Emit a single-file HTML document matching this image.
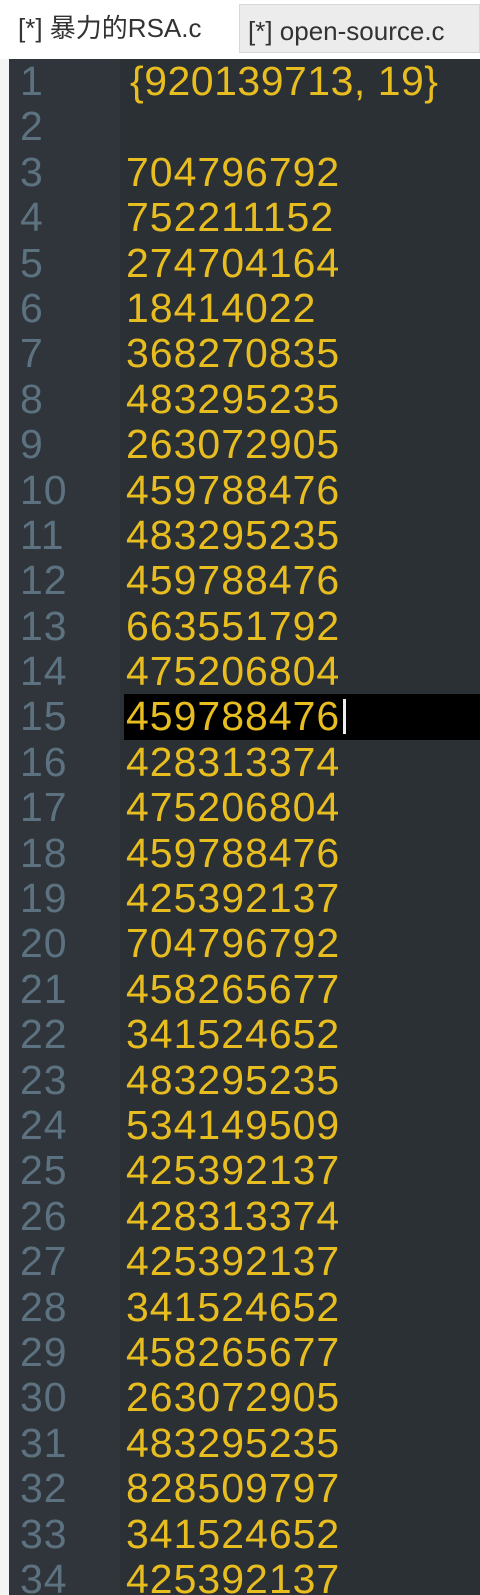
<!DOCTYPE html>
<html><head><meta charset="utf-8"><style>
html,body{margin:0;padding:0;width:480px;height:1595px;overflow:hidden;background:#f4f4f4;font-family:"Liberation Sans","Noto Sans CJK SC",sans-serif}
.tabs{position:absolute;left:0;top:0;width:480px;height:59px;background:#fff}
.t1{position:absolute;left:18px;top:8px;font-size:26px;color:#333}
.t2{position:absolute;left:239px;top:4px;width:241px;height:49px;background:#ececec;border:1px solid #d8d8d8;box-sizing:border-box}
.t2 span{position:absolute;left:8px;top:11px;font-size:26px;color:#333}
.ed{position:absolute;left:9px;top:59px;width:471px;height:1536px;background:#2b3035;overflow:hidden}
.gut{position:absolute;left:0;top:0;width:111px;height:100%;background:#2f353a}
.ln{position:absolute;left:0;top:0;width:100%;font-size:41px;line-height:45.4px}
.row{height:45.4px;position:relative;white-space:pre}
.n{position:absolute;left:11px;color:#5d7280;letter-spacing:1px}
.c{position:absolute;left:117px;color:#e8bd20;letter-spacing:1px}
.cur{background:#000;left:115px;right:0;position:absolute;top:0;height:45.4px}
.caret{position:absolute;left:334px;top:5px;width:3px;height:35px;background:#eee}
</style></head><body>
<div class="tabs"><div class="t1">[*] 暴力的RSA.c</div><div class="t2"><span>[*] open-source.c</span></div></div>
<div class="ed"><div class="gut"></div><div class="ln">
<div class="row"><span class="n">1</span><span class="c" style="left:121px;letter-spacing:0.5px">{920139713, 19}</span></div>
<div class="row"><span class="n">2</span></div>
<div class="row"><span class="n">3</span><span class="c">704796792</span></div>
<div class="row"><span class="n">4</span><span class="c">752211152</span></div>
<div class="row"><span class="n">5</span><span class="c">274704164</span></div>
<div class="row"><span class="n">6</span><span class="c">18414022</span></div>
<div class="row"><span class="n">7</span><span class="c">368270835</span></div>
<div class="row"><span class="n">8</span><span class="c">483295235</span></div>
<div class="row"><span class="n">9</span><span class="c">263072905</span></div>
<div class="row"><span class="n">10</span><span class="c">459788476</span></div>
<div class="row"><span class="n">11</span><span class="c">483295235</span></div>
<div class="row"><span class="n">12</span><span class="c">459788476</span></div>
<div class="row"><span class="n">13</span><span class="c">663551792</span></div>
<div class="row"><span class="n">14</span><span class="c">475206804</span></div>
<div class="row"><span class="n">15</span><div class="cur"></div><span class="c">459788476</span><div class="caret"></div></div>
<div class="row"><span class="n">16</span><span class="c">428313374</span></div>
<div class="row"><span class="n">17</span><span class="c">475206804</span></div>
<div class="row"><span class="n">18</span><span class="c">459788476</span></div>
<div class="row"><span class="n">19</span><span class="c">425392137</span></div>
<div class="row"><span class="n">20</span><span class="c">704796792</span></div>
<div class="row"><span class="n">21</span><span class="c">458265677</span></div>
<div class="row"><span class="n">22</span><span class="c">341524652</span></div>
<div class="row"><span class="n">23</span><span class="c">483295235</span></div>
<div class="row"><span class="n">24</span><span class="c">534149509</span></div>
<div class="row"><span class="n">25</span><span class="c">425392137</span></div>
<div class="row"><span class="n">26</span><span class="c">428313374</span></div>
<div class="row"><span class="n">27</span><span class="c">425392137</span></div>
<div class="row"><span class="n">28</span><span class="c">341524652</span></div>
<div class="row"><span class="n">29</span><span class="c">458265677</span></div>
<div class="row"><span class="n">30</span><span class="c">263072905</span></div>
<div class="row"><span class="n">31</span><span class="c">483295235</span></div>
<div class="row"><span class="n">32</span><span class="c">828509797</span></div>
<div class="row"><span class="n">33</span><span class="c">341524652</span></div>
<div class="row"><span class="n">34</span><span class="c">425392137</span></div>
</div></div>
</body></html>
